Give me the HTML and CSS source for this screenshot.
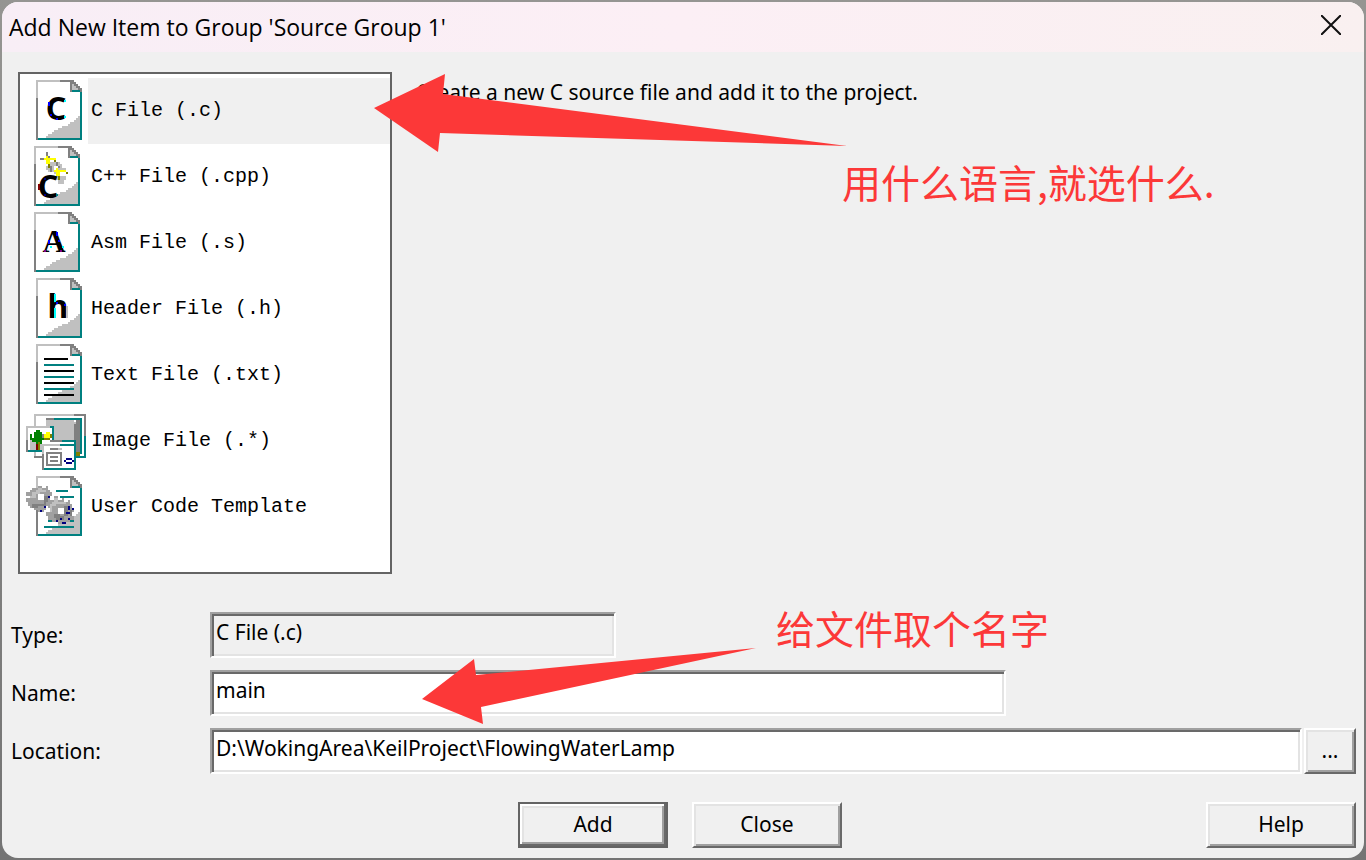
FILE: index.html
```html
<!DOCTYPE html>
<html lang="en">
<head>
    <meta charset="UTF-8">
    <meta name="viewport" content="width=device-width, initial-scale=1.0">
    <title>Add New Item to Group 'Source Group 1'</title>
    <link rel="stylesheet" href="styles.css">
</head>
<body>
    <!-- Blank sheet shared by the file icons -->
    <svg class="sprite" aria-hidden="true">
        <symbol id="sheet" viewBox="0 0 23 30">
            <path fill="#fff" d="M0 0h18l5 5v25H0z"/>
            <path fill="#c0c0c0" d="M22 17v12H5v-1h1v-1h2v-1h1v-1h2v-1h2v-1h3v-1h1v-1h2v-1h1v-1h1v-1h1v-1z"/>
            <path fill="#c0c0c0" d="M0 0h12v1H1v8H0zM18 1h1v1h1v1h1v2h-3z"/>
            <path fill="#808080" d="M12 0h7v1h1v1h1v1h1v1h1v2h-1V5h-1V4h-1V3h-1V2h-1v4h-1V1h-5zM0 9h1v21H0z"/>
            <path fill="#008080" d="M18 5h4v1h1v24H1v-1h21V6h-4z"/>
        </symbol>
    </svg>

    <div class="dialog" role="dialog" aria-labelledby="dialogTitle">
        <header class="titlebar">
            <h1 class="title" id="dialogTitle">Add New Item to Group 'Source Group 1'</h1>
            <button class="close-btn" type="button" aria-label="Close window">
                <svg viewBox="0 0 20 20" width="20" height="20"><path d="M0 0L20 20M20 0L0 20" stroke="#111" stroke-width="2"/></svg>
            </button>
        </header>

        <main class="content">
            <ul class="file-list" role="listbox" aria-label="File type">
                <li class="file-item selected" role="option" aria-selected="true">
                    <svg class="file-icon" viewBox="0 0 32 32" aria-hidden="true">
                        <use href="#sheet" x="6" y="1" width="23" height="30"/>
                        <text class="icon-letter" x="16" y="21">C</text>
                        <path fill="#00f" d="M12 12h1v2h-1zM13 18h1v1h-1zM16 20h1v1h-1z"/>
                        <path fill="#0ff" d="M20 11h1v1h-1zM20 19h1v1h-1z"/>
                    </svg>
                    <span class="file-name">C File (.c)</span>
                </li>
                <li class="file-item" role="option">
                    <svg class="file-icon" viewBox="0 0 32 32" aria-hidden="true">
                        <use href="#sheet" x="5" y="1" width="23" height="30"/>
                        <path fill="#c0c0c0" d="M11 11h1v1h1v1h1v1h-2v-1h-1zM13 9h5v1h1v2h2v1h-4v2h-2v-1h-2zM15 11v2h2v-2zM16 16h5v2h-1v2h-3v-2h-1z"/>
                        <path fill="#808080" d="M8 7h3v1H8zM11 4h1v2h-1zM12 6h1v1h-1zM13 11h1v3h-1zM16 9h1v2h-1zM17 11h1v1h-1z"/>
                        <path fill="#808000" d="M12 10h1v2h-1zM15 8h1v1h-1zM17 16h1v2h-1zM21 14h1v1h-1z"/>
                        <path fill="#ff0" d="M11 6h1v1h4v1h-3v2h-2V8h-1V7h1zM16 12h1v1h4v1h-3v2h-2v-2h-1v-1h1z"/>
                        <text class="icon-letter" x="12" y="27">C</text>
                        <path fill="#000080" d="M10 17h1v1h-1zM10 25h1v1h-1z"/>
                        <path fill="#800000" d="M7 20h1v3H7z"/>
                        <path fill="#008080" d="M16 25h1v1h-1z"/>
                    </svg>
                    <span class="file-name">C++ File (.cpp)</span>
                </li>
                <li class="file-item" role="option">
                    <svg class="file-icon" viewBox="0 0 32 32" aria-hidden="true">
                        <use href="#sheet" x="5" y="1" width="23" height="30"/>
                        <text class="icon-letter serif" x="15" y="21">A</text>
                        <path fill="#00f" d="M16 11h1v2h-1zM12 15h1v2h-1zM17 15h1v1h-1z"/>
                        <path fill="#0ff" d="M13 18h1v1h-1zM19 18h1v1h-1z"/>
                        <path fill="#800080" d="M10 20h1v1h-1zM18 20h1v1h-1z"/>
                    </svg>
                    <span class="file-name">Asm File (.s)</span>
                </li>
                <li class="file-item" role="option">
                    <svg class="file-icon" viewBox="0 0 32 32" aria-hidden="true">
                        <use href="#sheet" x="6" y="1" width="23" height="30"/>
                        <text class="icon-letter" x="17" y="21">h</text>
                        <path fill="#0ff" d="M15 9h1v4h-1zM15 16h1v5h-1z"/>
                        <path fill="#00f" d="M16 13h1v1h-1zM20 14h1v1h-1z"/>
                        <path fill="#c0c0c0" d="M21 15h1v6h-1z"/>
                    </svg>
                    <span class="file-name">Header File (.h)</span>
                </li>
                <li class="file-item" role="option">
                    <svg class="file-icon" viewBox="0 0 32 32" aria-hidden="true">
                        <use href="#sheet" x="6" y="1" width="23" height="30"/>
                        <path fill="#000" d="M10 8h12v1H10zM10 14h15v1H10zM10 20h15v1H10zM10 26h15v1H10z"/>
                        <path fill="#008080" d="M10 11h15v1H10zM10 17h15v1H10zM10 23h15v1H10z"/>
                    </svg>
                    <span class="file-name">Text File (.txt)</span>
                </li>
                <li class="file-item" role="option">
                    <svg class="file-icon" viewBox="0 0 32 32" aria-hidden="true">
                        <path fill="#fff" d="M5 3h26v22H5z"/>
                        <path fill="#c0c0c0" d="M5 3h20v1H6v20H5zM11 5h14v2h2v16H11z"/>
                        <path fill="#808080" d="M25 3h6v11h-1V4h-5zM11 5h4v1h-4zM26 6h2v17h-2v-4h-1V8h1zM5 24h5v1H5z"/>
                        <path fill="#008080" d="M15 5h14v18h-1V6H15zM30 14h1v11h-5v-1h4z"/>
                        <path fill="#808000" d="M26 22h2v2h-2z"/>
                        <path fill="#fff" d="M1 9h14v13H1z"/>
                        <path fill="#c0c0c0" d="M1 9h12v1H2v6H1zM3 16h9v1h2v4H3z"/>
                        <path fill="#808080" d="M1 16h1v6H1zM3 15h2v1H3zM9 13h1v2H9zM10 17h3v1h-3z"/>
                        <path fill="#008080" d="M13 9h2v7h-1v-6h-1zM2 21h7v1H2z"/>
                        <path fill="#008000" d="M5 12h1v-1h2v7h-1v1H6v-2H4v-1H3v-3h1v2h1zM8 16V12h1v3h1v1H9v2H8z"/>
                        <path fill="#800000" d="M6 18h1v3H6z"/>
                        <path fill="#808000" d="M7 17h1v4H7zM10 15h3v1h-3zM13 13h1v2h-1z"/>
                        <path fill="#ff0" d="M11 12h2v3h-3v-2h1z"/>
                        <path fill="#fff" d="M9 16h17v15H9z"/>
                        <path fill="#808080" d="M13 16h6v1h-6zM9 22h1v9H9zM13 20h4v1h-4zM11 22h8v7h-8z"/>
                        <path fill="#c0c0c0" d="M9 18h9v1h-8v4H9zM17 20h2v1h-2z"/>
                        <path fill="#fff" d="M12 23h6v5h-6z"/>
                        <path fill="#808080" d="M13 24h4v1h-4zM13 26h4v1h-4z"/>
                        <path fill="#008080" d="M19 16h7v15H10v-1h15V19h-7v-1h7v-1h-6z"/>
                        <path fill="#000080" d="M21 25h3v1h1v1h-1v1h-3v-1h-1v-1h1z"/>
                        <path fill="#fff" d="M21 26h3v1h-3z"/>
                    </svg>
                    <span class="file-name">Image File (.*)</span>
                </li>
                <li class="file-item" role="option">
                    <svg class="file-icon" viewBox="0 0 32 32" aria-hidden="true">
                        <use href="#sheet" x="6" y="1" width="23" height="30"/>
                        <path fill="#008080" d="M16 8h6v1h-6zM18 11h7v1h-7zM12 23h3v1h-3zM21 23h4v1h-4zM10 26h15v1H10z"/>
                        <path fill="#a0a0a0" d="M7 6h2v1h2V6h1v2h1v1h1v2h-1v2h1v2h-2v1h-1v2h-1v1H7v-1H5v-1H3v-1H2v-2H1v-2h2v-1H1V9h2V8h1V7h3z"/>
                        <path fill="#c0c0c0" d="M7 7h2v1h2v1H8v1H6v2H3v-1h1V9h2V8h1z"/>
                        <path fill="#fff" d="M7 10h3v3H7z"/>
                        <path fill="#808080" d="M10 11h2v3h-1v2H7v-1h3zM4 15h3v2H4z"/>
                        <path fill="#a0a0a0" d="M15 11h2v2h2v-1h1v2h2v-1h1v2h1v2h1v2h-1v2h1v2h-2v1h-2v1h-4v-1h-3v-1h-2v-2h-1v-2h2v-2h-1v-2h1v-2h2z"/>
                        <path fill="#c0c0c0" d="M15 12h2v2h4v1h-5v1h-2v3h-1v-4h1v-1h1z"/>
                        <path fill="#fff" d="M17 17h3v3h-3z"/>
                        <path fill="#808080" d="M15 20h3v1h2v2h-4v-1h-1zM20 16h2v5h-2zM23 18h1v3h-1z"/>
                        <path fill="#000080" d="M12 11h1v1h-1zM10 16h1v1h-1zM8 18h1v1H8zM22 16h1v2h-1zM24 17h1v1h-1zM21 19h2v1h-2zM18 22h1v1h-1zM16 23h1v1h-1zM22 22h1v1h-1zM19 24h2v1h-2z"/>
                    </svg>
                    <span class="file-name">User Code Template</span>
                </li>
            </ul>
            <p class="description">Create a new C source file and add it to the project.</p>
        </main>

        <form class="fields">
            <label for="type">Type:</label>
            <input class="field type" id="type" type="text" value="C File (.c)" readonly>

            <label for="name">Name:</label>
            <input class="field name" id="name" type="text" value="main">

            <label for="location">Location:</label>
            <div class="location-row">
                <input class="field" id="location" type="text" value="D:\WokingArea\KeilProject\FlowingWaterLamp">
                <button class="btn browse" type="button" aria-label="Browse">...</button>
            </div>
        </form>

        <footer class="actions">
            <button class="btn default" type="button">Add</button>
            <button class="btn" type="button">Close</button>
            <button class="btn help" type="button">Help</button>
        </footer>
    </div>

    <!-- Red tutorial marks on top of the dialog -->
    <svg class="arrows" width="860" height="740" aria-hidden="true">
        <polygon points="374,108 445,74 443,94 847,146 440,133 438,152"/>
        <polygon points="422,699 474,659 476,675 756,648 481,707 483,724"/>
    </svg>
    <p class="note note-language" lang="zh-CN">用什么语言,就选什么.</p>
    <p class="note note-name" lang="zh-CN">给文件取个名字</p>
</body>
</html>
```
FILE: styles.css
```css
* {
    margin: 0;
    padding: 0;
    box-sizing: border-box;
}

body {
    font-family: "Noto Sans", "Open Sans", sans-serif;
    font-size: 21px;
    line-height: 28px;
    color: #000;
    background: linear-gradient(#959592, #747474);
    min-height: 100vh;
    padding: 2px;
    position: relative;
}

.sprite {
    position: absolute;
    width: 0;
    height: 0;
}

.dialog {
    display: flex;
    flex-direction: column;
    min-height: calc(100vh - 4px);
    background: #f0f0f0;
    border-radius: 16px;
    overflow: hidden;
}

/* Title bar */
.titlebar {
    display: flex;
    align-items: center;
    justify-content: space-between;
    height: 50px;
    padding: 0 15px 0 7px;
    background: linear-gradient(90deg, #f8eef6, #fceff5 50%, #f9f0f0);
}

.title {
    font-family: "Open Sans", sans-serif;
    font-size: 23px;
    font-weight: 400;
}

.close-btn {
    display: flex;
    align-items: center;
    justify-content: center;
    width: 36px;
    height: 36px;
    padding-bottom: 4px;
    border: none;
    background: none;
}

/* File type list */
.content {
    display: flex;
    flex: 1;
    align-items: stretch;
    gap: 24px;
    padding: 20px 16px 0;
}

.file-list {
    flex: none;
    width: 374px;
    padding: 4px 0 0 4px;
    list-style: none;
    background: #fff;
    border: 2px solid #646464;
}

.file-item {
    display: flex;
    height: 66px;
}

.file-icon {
    flex: none;
    width: 64px;
    height: 64px;
    shape-rendering: crispEdges;
}

.icon-letter {
    font-family: "Noto Sans", sans-serif;
    font-size: 16px;
    font-weight: 700;
    text-anchor: middle;
}

.icon-letter.serif {
    font-family: "Liberation Serif", serif;
}

.file-name {
    flex: 1;
    padding-left: 3px;
    font-family: "Liberation Mono", monospace;
    font-size: 20px;
    line-height: 66px;
    white-space: pre;
}

.selected .file-name {
    background: #f0f0f0;
}

.description {
    padding-top: 6px;
}

/* Fields */
.fields {
    display: grid;
    grid-template-columns: 190px 1fr;
    align-items: center;
    gap: 12px 9px;
    padding: 38px 8px 0 9px;
}

.field {
    width: 100%;
    height: 46px;
    padding: 0 4px 6px;
    font: inherit;
    color: #000;
    background: #fff;
    border: 2px solid;
    border-color: #a0a0a0 #fff #fff #a0a0a0;
    box-shadow: inset 2px 2px #696969, inset -2px -2px #e3e3e3;
    outline: none;
}

.field.type {
    max-width: 406px;
    background: #f0f0f0;
}

.field.name {
    max-width: 796px;
}

.location-row {
    display: flex;
    gap: 2px;
}

/* Buttons */
.btn {
    width: 150px;
    height: 46px;
    padding-bottom: 2px;
    font: inherit;
    color: #000;
    background: #f0f0f0;
    border: 2px solid;
    border-color: #fff #696969 #696969 #fff;
    box-shadow: inset 2px 2px #e3e3e3, inset -2px -2px #a0a0a0;
}

.btn.default {
    border-color: #646464;
    box-shadow: inset -2px -2px #696969, inset 2px 2px #fff, inset -4px -4px #a0a0a0, inset 4px 4px #e3e3e3;
}

.btn.browse {
    flex: none;
    width: 52px;
}

.actions {
    display: grid;
    grid-template-columns: 1fr auto auto 1fr;
    column-gap: 24px;
    padding: 28px 8px 10px 2px;
}

.actions .default {
    grid-column: 2;
}

.actions .help {
    justify-self: end;
}

/* Tutorial marks */
.arrows {
    position: absolute;
    top: 0;
    left: 0;
    fill: #fc3838;
    pointer-events: none;
}

.note {
    position: absolute;
    font-family: "Noto Sans CJK SC", sans-serif;
    font-size: 39px;
    line-height: 48px;
    color: #fc3838;
    white-space: nowrap;
}

.note-language {
    top: 157px;
    left: 842px;
}

.note-name {
    top: 603px;
    left: 776px;
}
```
